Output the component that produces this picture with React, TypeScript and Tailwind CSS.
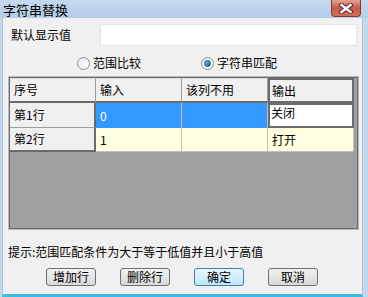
import React from 'react';

const font = { fontFamily: '"Noto Sans CJK SC", "Liberation Sans", sans-serif' };

function Radio({ checked, label }: { checked?: boolean; label: string }) {
  return (
    <div className="flex items-center gap-[3px]">
      <span className="w-[13px] h-[13px] rounded-full border border-[#8e8f8f] bg-gradient-to-br from-[#e9e9e9] to-[#ffffff] flex items-center justify-center">
        {checked && <span className="w-[7px] h-[7px] rounded-full bg-gradient-to-br from-[#7ec8ef] to-[#0d5d9a] border border-[#1a4f7a]" />}
      </span>
      <span className="text-[12px] leading-[14px] text-black">{label}</span>
    </div>
  );
}

function Btn({ label, primary }: { label: string; primary?: boolean }) {
  return (
    <button
      className={`w-[50px] h-[18px] rounded-[3px] border text-[12px] leading-[14px] text-black ${primary ? 'border-[#3c7fb1] bg-gradient-to-b from-[#eaf6fd] to-[#bee6fd]' : 'border-[#707070] bg-gradient-to-b from-[#f2f2f2] to-[#d9d9d9]'}`}
    >
      {label}
    </button>
  );
}

export default function App() {
  return (
    <div className="w-[368px] h-[297px] bg-[#c2d6ec] flex flex-col" style={font}>
      {/* title bar */}
      <div className="h-[18px] flex items-start justify-between bg-gradient-to-b from-[#c4d8ee] to-[#b6cde8] shrink-0">
        <span className="pl-[3px] pt-[2px] text-[13px] leading-[15px] text-black">字符串替换</span>
        <div className="mr-[7px] w-[30px] h-[17px] rounded-b-[4px] border border-t-0 border-[#8a3a30] bg-gradient-to-b from-[#e8a090] via-[#c75a48] to-[#d0705c] flex items-center justify-center">
          <svg width="16" height="11" viewBox="0 0 16 11">
            <path d="M3.5 2 L12.5 9 M12.5 2 L3.5 9" stroke="#4a2a26" strokeWidth="4.4" strokeLinecap="square" />
            <path d="M3.5 2 L12.5 9 M12.5 2 L3.5 9" stroke="#ffffff" strokeWidth="2.4" strokeLinecap="square" />
          </svg>
        </div>
      </div>

      {/* body */}
      <div className="flex-1 flex flex-col bg-[#f0f0f0] ml-[2px] mr-[5px] border-l border-r border-[#aac4e2] border-b-[3px] border-b-[#3cbde8] px-[5px] pt-[6px]">
        <div className="flex items-center h-[22px]">
          <span className="w-[93px] pl-[3px] text-[12px] text-black">默认显示值</span>
          <div className="w-[258px] h-[22px] bg-white border border-[#e2e3ea] rounded-[2px]" />
        </div>

        <div className="flex items-center h-[16px] mt-[9px]">
          <div className="ml-[69px]"><Radio label="范围比较" /></div>
          <div className="ml-[60px]"><Radio checked label="字符串匹配" /></div>
        </div>

        <div className="mt-[5px] h-[154px] w-[351px] border border-[#b9b9b9]">
          <div className="w-full h-full border border-[#6b6b6b] bg-[#a0a0a0] flex flex-col text-[12px] text-black">
            {/* header row */}
            <div className="flex h-[25px]">
              {['序号', '输入', '该列不用'].map((h) => (
                <div key={h} className="w-[86px] h-full bg-[#f0f0f0] border-t border-t-[#dcdcdc] border-r border-r-[#a0a0a0] border-b-2 border-b-[#6b6b6b] pl-[4px] flex items-center">{h}</div>
              ))}
              <div className="w-[86px] h-full bg-[#f0f0f0] border-2 border-[#6b6b6b] pl-[2px] flex items-center">输出</div>
            </div>
            {/* row 1 */}
            <div className="flex h-[25px]">
              <div className="w-[86px] h-full bg-[#f0f0f0] border-r-2 border-r-[#6b6b6b] border-b border-b-[#a0a0a0] pl-[4px] flex items-center">第1行</div>
              <div className="w-[86px] h-full bg-[#3399ff] border-r border-r-[#c0c0c0] pl-[4px] flex items-center text-white">0</div>
              <div className="w-[86px] h-full bg-[#3399ff] border-r border-r-[#c0c0c0]" />
              <div className="w-[86px] h-full bg-white border-2 border-[#6b6b6b] pl-[1px] flex items-center leading-[14px]">
                <span className="-mt-[6px]">关闭</span>
              </div>
            </div>
            {/* row 2 */}
            <div className="flex h-[24px]">
              <div className="w-[86px] h-full bg-[#f0f0f0] border-r-2 border-r-[#6b6b6b] border-b-2 border-b-[#6b6b6b] pl-[4px] flex items-center">第2行</div>
              <div className="w-[86px] h-full bg-[#ffffe1] border-r border-r-[#c0c0c0] border-b border-b-[#c0c0c0] pl-[4px] flex items-center">1</div>
              <div className="w-[86px] h-full bg-[#ffffe1] border-r border-r-[#c0c0c0] border-b border-b-[#c0c0c0]" />
              <div className="w-[86px] h-full bg-[#ffffe1] border-r border-r-[#c0c0c0] border-b border-b-[#c0c0c0] pl-[4px] flex items-center">打开</div>
            </div>
          </div>
        </div>

        <div className="mt-[15px] text-[12px] leading-[14px] text-black">提示:范围匹配条件为大于等于低值并且小于高值</div>

        <div className="flex mt-[9px] pl-[38px] gap-[24px]">
          <Btn label="增加行" />
          <Btn label="删除行" />
          <Btn label="确定" primary />
          <Btn label="取消" />
        </div>
      </div>
    </div>
  );
}
